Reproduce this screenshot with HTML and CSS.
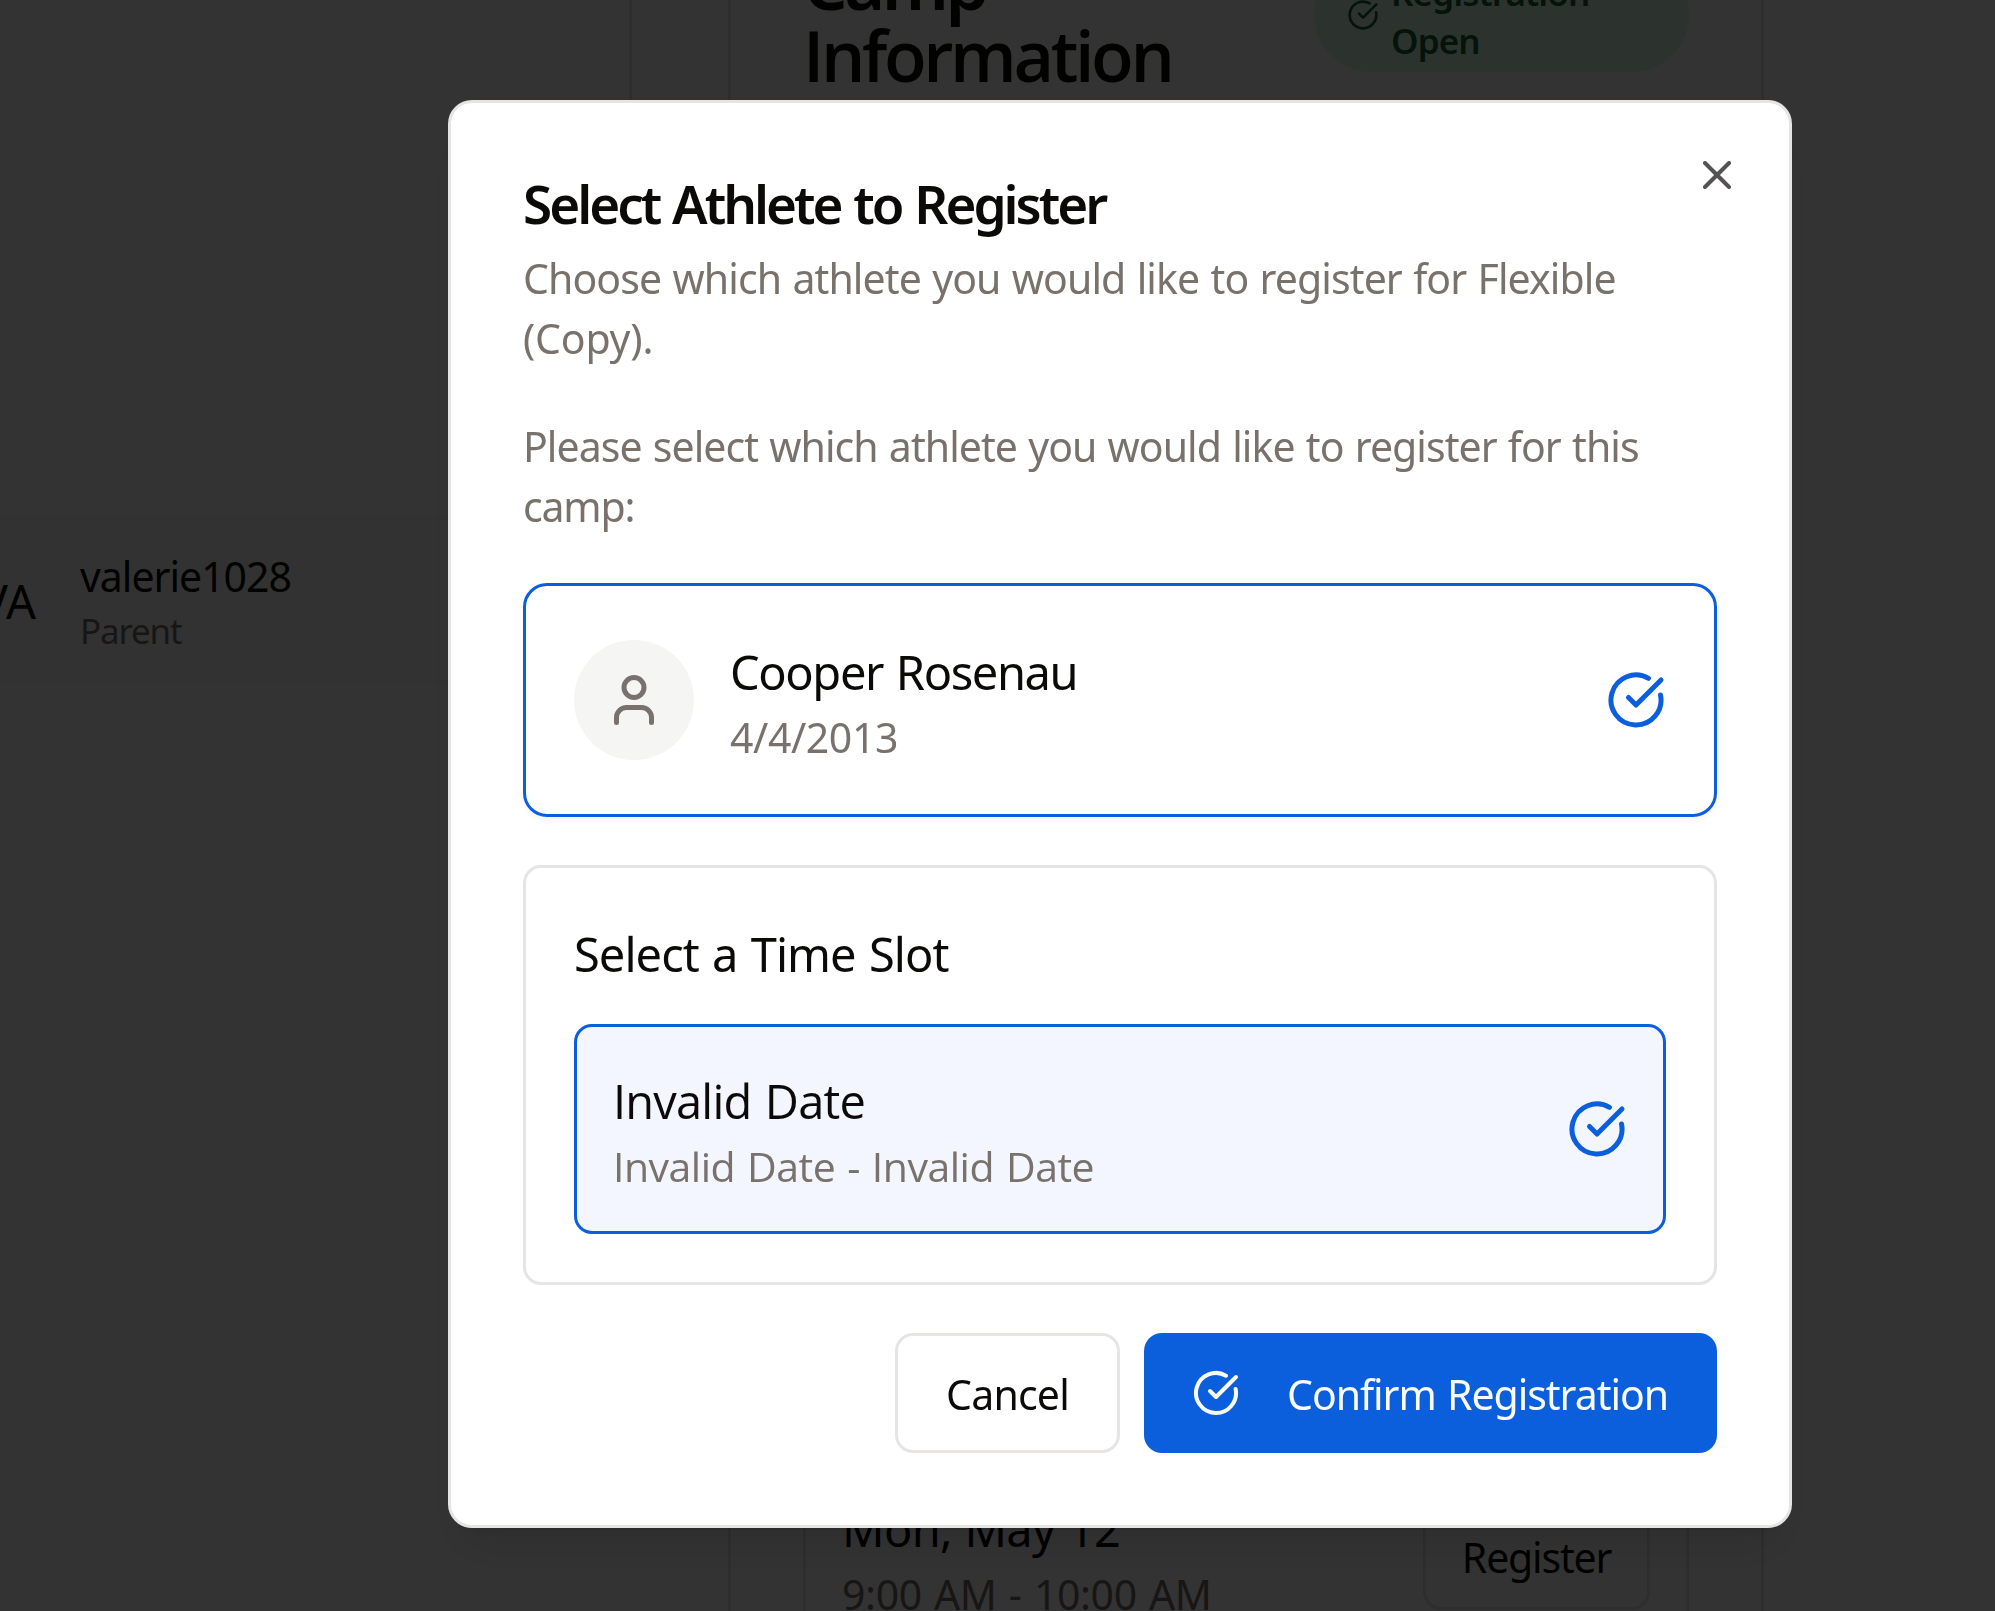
FILE: index.html
```html
<!DOCTYPE html>
<html lang="en">
<head>
<meta charset="utf-8">
<title>Camp Registration</title>
<link rel="stylesheet" href="styles.css">
</head>
<body>
<svg class="defs" aria-hidden="true">
  <symbol id="check" viewBox="0 0 24 24"><path d="M21.801 10A10 10 0 1 1 17 3.335"/><path d="m9 11 3 3L22 4"/></symbol>
  <symbol id="user" viewBox="0 0 24 24"><path d="M19 21v-2a4 4 0 0 0-4-4H9a4 4 0 0 0-4 4v2"/><circle cx="12" cy="7" r="4"/></symbol>
  <symbol id="close" viewBox="0 0 24 24"><path d="M18 6 6 18"/><path d="m6 6 12 12"/></symbol>
</svg>
<div class="page">
  <aside class="sidebar">
    <div class="account">
      <div class="initials"><span class="t va">VA</span></div>
      <div class="account-info">
        <div class="line-sm"><span class="t username">valerie1028</span></div>
        <div class="line-xs"><span class="t role">Parent</span></div>
      </div>
    </div>
  </aside>
  <main class="content">
    <section class="camp">
      <header class="camp-head">
        <h1 class="camp-title"><span class="t camp-word">Camp</span><br><span class="t info-word">Information</span></h1>
        <div class="status"><svg class="icon"><use href="#check"/></svg><span class="t status-text">Registration<br>Open</span></div>
      </header>
      <div class="schedule">
        <div>
          <div class="line-base"><span class="t day">Mon, May 12</span></div>
          <div class="line-sm"><span class="t hours">9:00 AM - 10:00 AM</span></div>
        </div>
        <button class="register"><span class="t register-text">Register</span></button>
      </div>
    </section>
  </main>
</div>
<div class="overlay">
  <div class="dialog" role="dialog">
    <button class="close"><svg class="icon"><use href="#close"/></svg></button>
    <h2 class="title"><span class="t title-text">Select Athlete to Register</span></h2>
    <p class="text"><span class="t desc1">Choose which athlete you would like to register for Flexible</span><br><span class="t desc2">(Copy).</span></p>
    <p class="text prompt"><span class="t prompt1">Please select which athlete you would like to register for this</span><br><span class="t prompt2">camp:</span></p>
    <div class="athlete">
      <div class="avatar"><svg class="icon"><use href="#user"/></svg></div>
      <div class="grow">
        <div class="line-base"><span class="t athlete-name">Cooper Rosenau</span></div>
        <div class="line-sm muted"><span class="t birth">4/4/2013</span></div>
      </div>
      <svg class="icon check"><use href="#check"/></svg>
    </div>
    <div class="slots">
      <div class="line-base"><span class="t slots-title">Select a Time Slot</span></div>
      <div class="slot">
        <div class="grow">
          <div class="line-base"><span class="t plain slot-day">Invalid Date</span></div>
          <div class="line-sm muted"><span class="t plain slot-time">Invalid Date - Invalid Date</span></div>
        </div>
        <svg class="icon check"><use href="#check"/></svg>
      </div>
    </div>
    <footer class="actions">
      <button class="btn cancel"><span class="t cancel-text">Cancel</span></button>
      <button class="btn confirm"><svg class="icon"><use href="#check"/></svg><span class="t confirm-text">Confirm Registration</span></button>
    </footer>
  </div>
</div>
</body>
</html>
```

FILE: styles.css
```css
* { box-sizing: border-box; }
html, body { height: 100%; }
body {
  margin: 0;
  overflow: hidden;
  background: #fff;
  color: #0c0a09;
  font-family: "Noto Sans", "Open Sans", sans-serif;
  font-size: 42px;
  line-height: 60px;
}
h1, h2, p { margin: 0; }
button { font: inherit; color: inherit; background: none; border: 0; padding: 0; }
.defs { display: none; }
.icon { flex: none; fill: none; stroke: currentColor; stroke-width: 2; stroke-linecap: round; stroke-linejoin: round; display: block; }
.t { display: inline-block; white-space: nowrap; transform: translateY(1px); }
.plain { font-family: "Open Sans", sans-serif; }
.muted { color: #78716c; }
.line-base { font-size: 47px; line-height: 72px; height: 72px; }
.line-sm { font-size: 41px; line-height: 60px; height: 60px; }
.line-xs { font-size: 35px; line-height: 48px; height: 48px; }
.line-base .t, .line-xs .t, .initials .t, .status .t { transform: translateY(2px); }
.grow { flex: 1; }

/* Page behind the dialog */
.page { display: flex; height: 1611px; overflow: hidden; }
.sidebar { width: 632px; height: 1500px; flex: none; border-right: 3px solid #e7e5e4; padding-top: 515px; }
.account { display: flex; align-items: center; height: 168px; margin-right: 24px; background: #f9f9f8; }
.initials { width: 36px; font-size: 47px; display: flex; justify-content: flex-end; }
.account-info { margin-left: 44px; }
.role, .hours { color: #78716c; }
.content { flex: 1; padding-left: 96px; }
.camp { width: 1036px; height: 1640px; border: 3px solid #e7e5e4; border-width: 0 3px; padding: 0 72px; }
.camp-head { display: flex; justify-content: space-between; align-items: flex-start; height: 1451px; }
.camp-title { font-size: 70px; line-height: 72px; font-weight: 600; margin-top: -54px; }
.info-word { font-family: "Open Sans", sans-serif; }
.status { display: flex; align-items: center; width: 375px; height: 114px; margin-top: -42px; padding-left: 33px; border-radius: 57px; background: #dcfce7; color: #166534; font-size: 35px; line-height: 48px; font-weight: 600; }
.status .icon { width: 32px; height: 32px; margin-right: 12px; }
.schedule { display: flex; justify-content: space-between; align-items: flex-start; height: 210px; border: 3px solid #e7e5e4; border-radius: 18px; padding: 37px 36px; }
.register { width: 227px; height: 108px; margin-top: 11px; border: 3px solid #e7e5e4; border-radius: 18px; font-size: 41px; }

/* Dialog */
.overlay { position: fixed; inset: 0; background: rgba(0, 0, 0, .8); padding: 100px 0 0 448px; }
.dialog {
  position: relative;
  width: 1344px;
  height: 1428px;
  padding: 72px;
  border: 3px solid #e7e5e4;
  border-radius: 24px;
  background: #fff;
  box-shadow: 0 30px 45px -9px rgba(0, 0, 0, .1), 0 12px 18px -12px rgba(0, 0, 0, .1);
}
.close { position: absolute; top: 48px; right: 48px; opacity: .7; }
.close .icon { width: 48px; height: 48px; }
.title { font-size: 53px; line-height: 54px; font-weight: 600; }
.title .t { transform: translateY(2px); }
.text { margin-top: 18px; font-size: 41px; color: #78716c; }
.prompt { margin-top: 48px; }
.athlete { display: flex; align-items: center; margin-top: 48px; height: 234px; padding: 48px; border: 3px solid #0b5fdd; border-radius: 24px; box-shadow: 0 3px 6px rgba(0, 0, 0, .05); }
.avatar { display: flex; align-items: center; justify-content: center; width: 120px; height: 120px; margin-right: 36px; border-radius: 50%; background: #f5f5f4; color: #78716c; }
.avatar .icon, .check { width: 60px; height: 60px; }
.check { color: #0b5fdd; }
.slots { margin-top: 48px; height: 420px; padding: 48px; border: 3px solid #e5e5e5; border-radius: 18px; }
.slot { display: flex; align-items: center; height: 210px; margin-top: 36px; padding: 36px; border: 3px solid #0b5fdd; border-radius: 18px; background: #f3f6fe; }
.actions { display: flex; justify-content: flex-end; gap: 24px; margin-top: 48px; }
.btn { display: flex; align-items: center; justify-content: center; height: 120px; border-radius: 18px; font-size: 41px; }
.cancel { width: 225px; border: 3px solid #e7e5e4; }
.confirm { width: 573px; padding-left: 48px; justify-content: flex-start; background: #0b5fdd; color: #fafaf9; }
.confirm .icon { width: 48px; height: 48px; margin-right: 47px; }

/* Per-string tracking */
.title-text { letter-spacing: -3px; word-spacing: 2px; }
.camp-word, .info-word { letter-spacing: -3.4px; }
.status-text { letter-spacing: -.9px; }
.desc1 { letter-spacing: -.9px; word-spacing: 1.5px; }
.desc2 { letter-spacing: -.2px; }
.prompt1 { letter-spacing: -.95px; word-spacing: 1.5px; }
.prompt2 { letter-spacing: -1.2px; }
.username { letter-spacing: -1px; }
.role { letter-spacing: -1.2px; }
.athlete-name { letter-spacing: -1.4px; word-spacing: 2px; }
.birth { letter-spacing: -.4px; }
.slots-title { letter-spacing: -.95px; word-spacing: 2px; }
.slot-day { letter-spacing: -.8px; word-spacing: 2px; }
.slot-time { letter-spacing: -.5px; word-spacing: 1.8px; }
.cancel-text { letter-spacing: -.8px; }
.confirm-text { letter-spacing: -1.03px; word-spacing: 1.5px; }
.day { letter-spacing: -.7px; word-spacing: 1px; }
.hours { letter-spacing: -.4px; word-spacing: 2px; }
.register-text { letter-spacing: -1.2px; }
```
